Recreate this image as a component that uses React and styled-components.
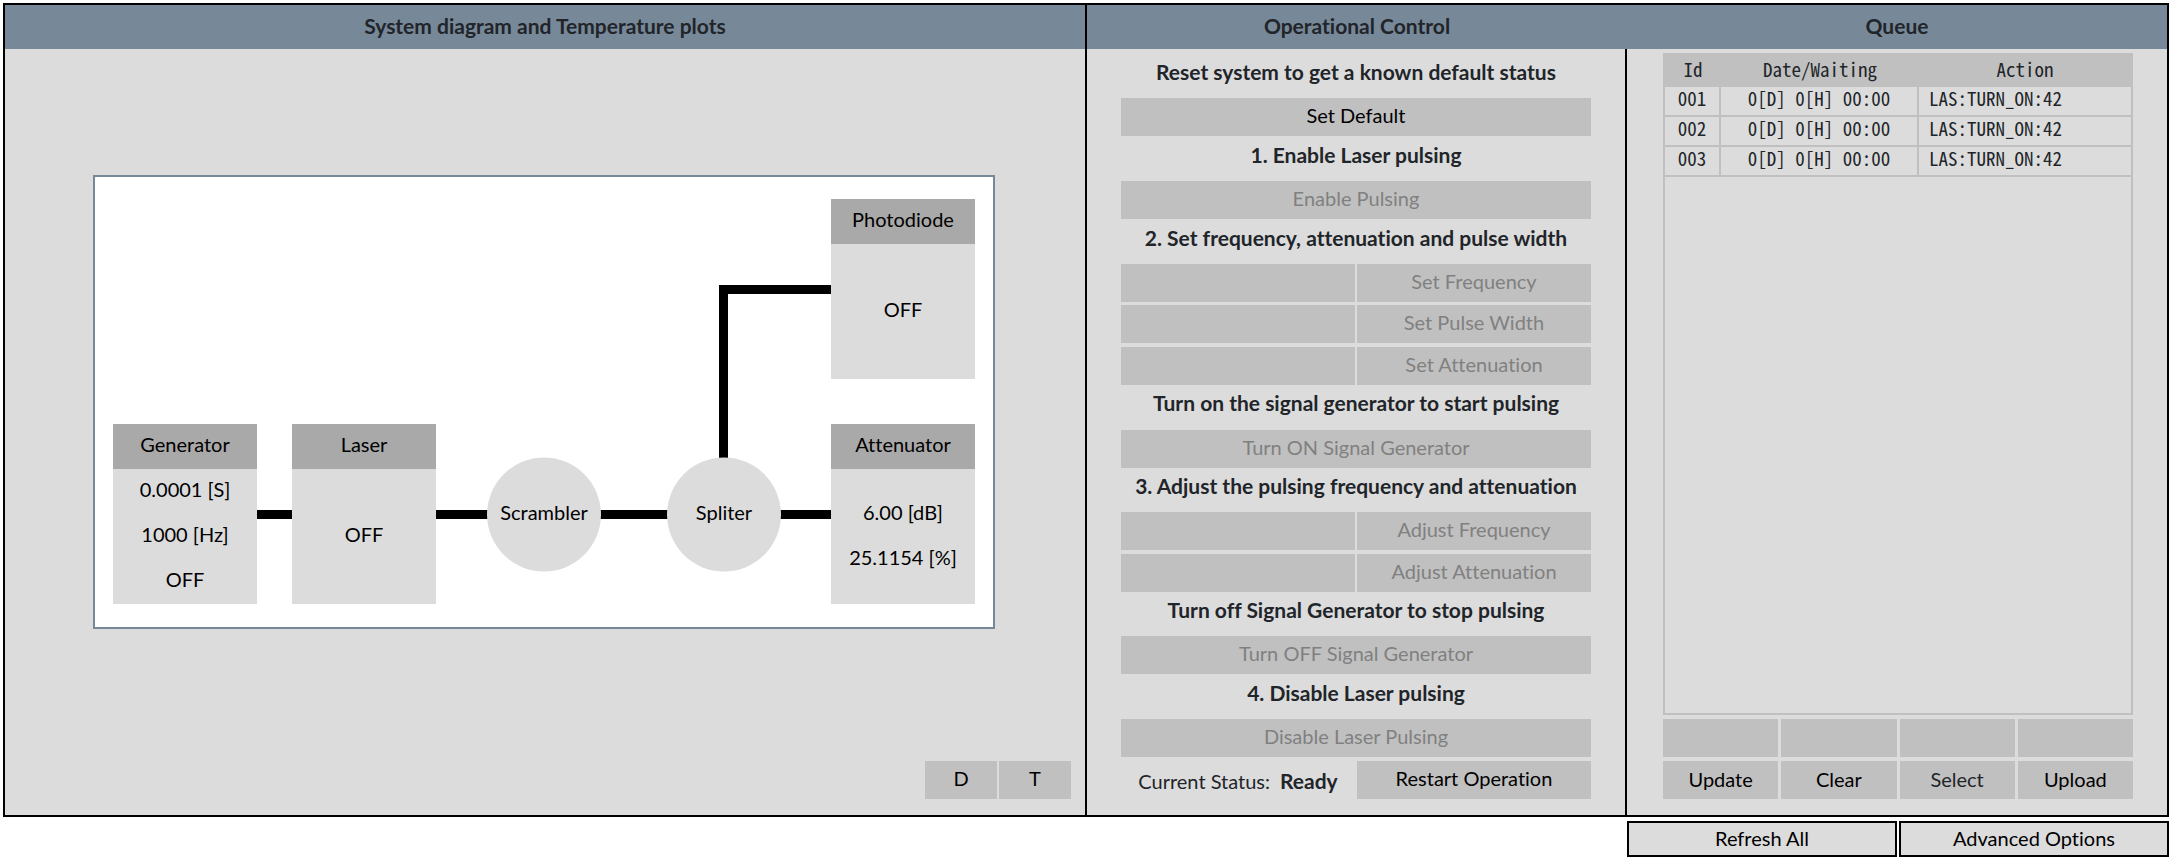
import React from "react";
import styled, { createGlobalStyle } from "styled-components";

const GlobalStyle = createGlobalStyle`
  *, *::before, *::after { box-sizing: border-box; }
  body {
    margin: 0;
    background: #ffffff;
    color: #212529;
    font-family: "Trebuchet MS", Lato, "Open Sans", sans-serif;
    font-size: 20px;
    line-height: 30px;
    font-variant-ligatures: none;
  }
  button, input { font: inherit; font-variant-ligatures: none; border-radius: 0; margin: 0; }
`;

const Page = styled.div`
  display: flex;
  flex-direction: column;
  gap: 4px;
  min-height: 100vh;
  padding: 3px 4px 6px 3px;
`;

const Board = styled.main`
  flex: 1;
  display: grid;
  grid-template-columns: calc(50% + 1px) 1fr 1fr;
  border: 2px solid #000000;
  background: #dcdcdc;
`;

const Panel = styled.section`
  display: flex;
  flex-direction: column;
  min-width: 0;
  border-right: ${(p) => (p.$divided ? "2px solid #000000" : "0")};
`;

const PanelTitle = styled.h2`
  margin: 0;
  padding-bottom: 2px;
  height: 44px;
  display: flex;
  align-items: center;
  justify-content: center;
  background: #778899;
  font-size: 21px;
  font-weight: 700;
`;

const PanelBody = styled.div`
  flex: 1;
  display: flex;
  flex-direction: column;
  border-right: ${(p) => (p.$divided ? "2px solid #000000" : "0")};
`;

const Button = styled.button`
  height: 38px;
  width: 100%;
  min-width: 0;
  padding: 0 0 4px;
  border: 0;
  background: #c0c0c0;
  color: ${(p) => (p.$soft ? "#212529" : "#000000")};
  cursor: pointer;
  &:disabled {
    color: #808080;
    cursor: default;
  }
`;

const Field = styled.input`
  height: 38px;
  width: 100%;
  min-width: 0;
  padding: 0 8px;
  border: 0;
  background: #c0c0c0;
`;

/* ---- System diagram ---- */

const DiagramArea = styled.div`
  flex: 1;
  display: flex;
  align-items: center;
  justify-content: center;
  padding: 0 90px 0 88px;
`;

const Diagram = styled.svg`
  display: block;
  width: 100%;
  border: 2px solid #778899;
  background: #ffffff;
  font-size: 20px;
  text-anchor: middle;
`;

const ViewSwitch = styled.div`
  display: grid;
  grid-template-columns: 72px 72px;
  justify-content: end;
  gap: 2px;
  padding: 6px 14px 16px;
`;

function Device({ x, y, title, lines }) {
  return (
    <g>
      <rect x={x} y={y} width="144" height="180" fill="#dcdcdc" />
      <rect x={x} y={y} width="144" height="45" fill="#a9a9a9" />
      <text x={x + 72} y={y + 28}>{title}</text>
      {lines.map(([text, dy]) => (
        <text key={text} x={x + 72} y={y + dy}>{text}</text>
      ))}
    </g>
  );
}

function Coupler({ cx, title }) {
  return (
    <g>
      <circle cx={cx} cy="337.500" r="57" fill="#dcdcdc" />
      <text x={cx} y="343">{title}</text>
    </g>
  );
}

function SystemDiagram() {
  return (
    <Diagram viewBox="0 0 898 450" role="img" aria-label="System diagram">
      <g fill="none" stroke="#000000" strokeWidth="9">
        <path d="M150 337.500H750" />
        <path d="M628.500 337V112.500H750" />
      </g>
      <Device x={18} y={247} title="Generator" lines={[["0.0001 [S]", 73], ["1000 [Hz]", 118], ["OFF", 163]]} />
      <Device x={197} y={247} title="Laser" lines={[["OFF", 118]]} />
      <Device x={736} y={22} title="Photodiode" lines={[["OFF", 118]]} />
      <Device x={736} y={247} title="Attenuator" lines={[["6.00 [dB]", 96], ["25.1154 [%]", 141]]} />
      <Coupler cx={449} title="Scrambler" />
      <Coupler cx={629} title="Spliter" />
    </Diagram>
  );
}

/* ---- Operational control ---- */

const Steps = styled.div`
  flex: 1;
  display: grid;
  grid-auto-rows: minmax(40px, 1fr);
  align-items: start;
  padding: 8px 34px 13px;
`;

const StepTitle = styled.h3`
  margin: 0;
  font-size: 21px;
  font-weight: 700;
  text-align: center;
  white-space: nowrap;
`;

const Pair = styled.div`
  display: grid;
  grid-template-columns: 1fr 1fr;
  gap: 2px;
`;

const Status = styled.div`
  display: flex;
  justify-content: center;
  gap: 10px;
  line-height: 40px;
  height: 38px;
  white-space: nowrap;
  strong {
    font-size: 21px;
  }
`;

function FieldAction({ label }) {
  return (
    <Pair>
      <Field aria-label={label} disabled />
      <Button disabled>{label}</Button>
    </Pair>
  );
}

/* ---- Queue ---- */

const QueueBody = styled.div`
  flex: 1;
  display: flex;
  flex-direction: column;
  gap: 4px;
  padding: 4px 34px 16px 36px;
`;

const QueueList = styled.div`
  flex: 1;
  border: 2px solid #c0c0c0;
`;

const QueueTable = styled.table`
  width: 100%;
  table-layout: fixed;
  border-collapse: separate;
  border-spacing: 0;
  font-family: "Noto Sans Mono CJK JP", "DejaVu Sans Mono", monospace;
  font-size: 19px;
  line-height: 22px;
  th {
    height: 32px;
    padding: 0 0 4px;
    background: #c0c0c0;
    font-weight: 400;
  }
  td {
    height: 30px;
    padding: 0 0 6px;
    border-bottom: 2px solid #c0c0c0;
    border-right: 2px solid #c0c0c0;
    text-align: center;
    white-space: nowrap;
  }
  td:last-child {
    padding-left: 10px;
    border-right: 0;
    text-align: left;
  }
`;

const IdCol = styled.col`
  width: 56px;
`;

const DateCol = styled.col`
  width: 198px;
`;

const QueueActions = styled.div`
  display: grid;
  grid-template-columns: repeat(4, 1fr);
  gap: 4px 3px;
`;

const QueueButton = styled(Button)`
  padding-bottom: 2px;
`;

const Footer = styled.footer`
  align-self: flex-end;
  width: calc((100% - 2px) / 4 + 1px);
  display: grid;
  grid-template-columns: 1fr 1fr;
  gap: 2px;
`;

const FooterButton = styled(Button)`
  height: 36px;
  padding-bottom: 2px;
  border: 2px solid #000000;
  background: #dcdcdc;
`;

const QUEUE = ["001", "002", "003"].map((id) => ({
  id,
  wait: "0[D] 0[H] 00:00",
  action: "LAS:TURN_ON:42",
}));

const QUEUE_FIELDS = ["Update", "Clear", "Select", "Upload"];

export default function App() {
  return (
    <>
      <GlobalStyle />
      <Page>
        <Board>
          <Panel $divided>
            <PanelTitle>System diagram and Temperature plots</PanelTitle>
            <PanelBody>
              <DiagramArea>
                <SystemDiagram />
              </DiagramArea>
              <ViewSwitch>
                <Button>D</Button>
                <Button>T</Button>
              </ViewSwitch>
            </PanelBody>
          </Panel>

          <Panel>
            <PanelTitle>Operational Control</PanelTitle>
            <PanelBody $divided>
              <Steps>
                <StepTitle>Reset system to get a known default status</StepTitle>
                <Button>Set Default</Button>
                <StepTitle>1. Enable Laser pulsing</StepTitle>
                <Button disabled>Enable Pulsing</Button>
                <StepTitle>2. Set frequency, attenuation and pulse width</StepTitle>
                <FieldAction label="Set Frequency" />
                <FieldAction label="Set Pulse Width" />
                <FieldAction label="Set Attenuation" />
                <StepTitle>Turn on the signal generator to start pulsing</StepTitle>
                <Button disabled>Turn ON Signal Generator</Button>
                <StepTitle>3. Adjust the pulsing frequency and attenuation</StepTitle>
                <FieldAction label="Adjust Frequency" />
                <FieldAction label="Adjust Attenuation" />
                <StepTitle>Turn off Signal Generator to stop pulsing</StepTitle>
                <Button disabled>Turn OFF Signal Generator</Button>
                <StepTitle>4. Disable Laser pulsing</StepTitle>
                <Button disabled>Disable Laser Pulsing</Button>
                <Pair>
                  <Status>
                    <span>Current Status:</span>
                    <strong>Ready</strong>
                  </Status>
                  <Button>Restart Operation</Button>
                </Pair>
              </Steps>
            </PanelBody>
          </Panel>

          <Panel>
            <PanelTitle>Queue</PanelTitle>
            <QueueBody>
              <QueueList>
                <QueueTable>
                  <colgroup>
                    <IdCol />
                    <DateCol />
                    <col />
                  </colgroup>
                  <thead>
                    <tr>
                      <th scope="col">Id</th>
                      <th scope="col">Date/Waiting</th>
                      <th scope="col">Action</th>
                    </tr>
                  </thead>
                  <tbody>
                    {QUEUE.map((row) => (
                      <tr key={row.id}>
                        <td>{row.id}</td>
                        <td>{row.wait}</td>
                        <td>{row.action}</td>
                      </tr>
                    ))}
                  </tbody>
                </QueueTable>
              </QueueList>
              <QueueActions>
                {QUEUE_FIELDS.map((name) => (
                  <Field key={name} aria-label={name} />
                ))}
                {QUEUE_FIELDS.map((name) => (
                  <QueueButton key={name} $soft={name === "Select"}>{name}</QueueButton>
                ))}
              </QueueActions>
            </QueueBody>
          </Panel>
        </Board>
        <Footer>
          <FooterButton>Refresh All</FooterButton>
          <FooterButton>Advanced Options</FooterButton>
        </Footer>
      </Page>
    </>
  );
}
